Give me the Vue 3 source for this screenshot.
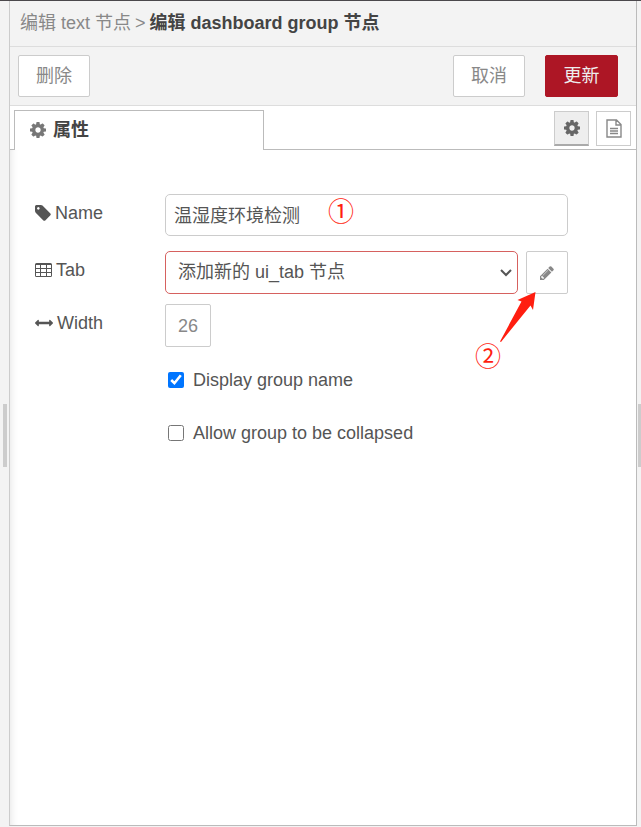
<script setup>
import { ref } from 'vue'

const name = ref('温湿度环境检测')
const tab = ref('new')
const width = ref(26)
const displayName = ref(true)
const collapsible = ref(false)

const cogPath = 'M1152 896q0-106-75-181t-181-75-181 75-75 181 75 181 181 75 181-75 75-181zm512-109v222q0 12-8 23t-20 13l-185 28q-19 54-39 91 35 50 107 138 10 12 10 25t-9 23q-27 37-99 108t-94 71q-12 0-26-9l-138-108q-44 23-91 38-16 136-29 186-7 28-36 28h-222q-14 0-24.5-8.5t-11.5-21.5l-28-184q-49-16-90-37l-141 107q-10 9-25 9-14 0-25-11-126-114-165-168-7-10-7-23 0-12 8-23 15-21 51-66.5t54-70.5q-27-50-41-99l-183-27q-13-2-21-12.5t-8-23.5v-222q0-12 8-23t19-13l186-28q14-46 39-92-40-57-107-138-10-12-10-24 0-10 9-23 26-36 98.5-107.5t94.5-71.5q13 0 26 10l138 107q44-23 91-38 16-136 29-186 7-28 36-28h222q14 0 24.5 8.5t11.5 21.5l28 184q49 16 90 37l142-107q9-9 24-9 13 0 25 10 129 119 165 170 7 8 7 22 0 12-8 23-15 21-51 66.5t-54 70.5q26 50 41 98l183 28q13 2 21 12.5t8 23.5z'
</script>

<template>
  <div class="workspace">
    <div class="gutter gutter-left"><span class="grip"></span></div>

    <main class="tray">
      <header class="crumbs">
        <span class="crumb">编辑 text 节点</span>
        <span class="crumb">&gt;</span>
        <h1 class="crumb-current">编辑 dashboard group 节点</h1>
      </header>

      <div class="toolbar">
        <button type="button" class="btn">删除</button>
        <span class="spacer"></span>
        <button type="button" class="btn">取消</button>
        <button type="button" class="btn btn-primary">更新</button>
      </div>

      <div class="tabs">
        <button type="button" class="tab">
          <svg class="icon-cog" viewBox="128 128 1536 1536"><path :d="cogPath" /></svg>
          <span>属性</span>
        </button>
        <div class="tab-tools">
          <button type="button" class="tool tool-active" aria-label="属性">
            <svg class="icon-cog" viewBox="128 128 1536 1536"><path :d="cogPath" /></svg>
          </button>
          <button type="button" class="tool" aria-label="描述">
            <svg class="icon-file" viewBox="0 0 16 19"><path d="M1 1h9.500L15 5.500V18H1zM10 1v5h5M4 9.500h8M4 12h8M4 14.500h8" /></svg>
          </button>
        </div>
      </div>

      <form class="form" @submit.prevent>
        <div class="row row-name">
          <label class="label" for="group-name">
            <svg class="icon-tag" viewBox="128 128 1536 1536"><path d="M576 448q0-53-37.500-90.500t-90.500-37.500-90.500 37.500-37.500 90.500 37.500 90.500 90.500 37.500 90.500-37.500 37.500-90.500zm1067 576q0 53-37 90l-491 492q-39 37-91 37-53 0-90-37l-715-716q-38-37-64.500-101t-26.500-117v-416q0-52 38-90t90-38h416q53 0 117 26.500t102 64.500l715 714q37 39 37 91z" /></svg>
            <span>Name</span>
          </label>
          <input id="group-name" v-model="name" class="text-input" type="text" />
        </div>

        <div class="row row-tab">
          <label class="label" for="group-tab">
            <svg class="icon-table" viewBox="0 0 17 15"><path fill-rule="evenodd" d="M1.500 0h14A1.500 1.500 0 0 1 17 1.500v11a1.500 1.500 0 0 1-1.500 1.500h-14A1.500 1.500 0 0 1 0 12.500V1.500A1.500 1.500 0 0 1 1.500 0zM1 2v3h4V2zM6 2v3h5V2zM12 2v3h4V2zM1 6v3h4V6zM6 6v3h5V6zM12 6v3h4V6zM1 10v3h4v-3zM6 10v3h5v-3zM12 10v3h4v-3z" /></svg>
            <span>Tab</span>
          </label>
          <div class="select-wrap">
            <select id="group-tab" v-model="tab" class="select">
              <option value="new">添加新的 ui_tab 节点</option>
            </select>
            <svg class="chevron" viewBox="0 0 12 8"><path d="M1 1l5 5 5-5" /></svg>
          </div>
          <button type="button" class="edit" aria-label="编辑">
            <svg class="icon-pencil" viewBox="128 128 1536 1536"><path d="M491 1536l91-91-235-235-91 91v107h128v128h107zm523-928q0-22-22-22-10 0-17 7l-542 542q-7 7-7 17 0 22 22 22 10 0 17-7l542-542q7-7 7-17zm-54-192l416 416-832 832h-416v-416zm683 96q0 53-37 90l-166 166-416-416 166-165q36-38 90-38 53 0 91 38l235 234q37 39 37 91z" /></svg>
          </button>
        </div>

        <div class="row">
          <label class="label" for="group-width">
            <svg class="icon-arrows" viewBox="0 512 1792 768"><path d="M1792 896q0 26-19 45l-256 256q-19 19-45 19t-45-19-19-45v-128h-1024v128q0 26-19 45t-45 19-45-19l-256-256q-19-19-19-45t19-45l256-256q19-19 45-19t45 19 19 45v128h1024v-128q0-26 19-45t45-19 45 19l256 256q19 19 19 45z" /></svg>
            <span>Width</span>
          </label>
          <button id="group-width" type="button" class="size">{{ width }}</button>
        </div>

        <div class="checks">
          <label class="check"><input v-model="displayName" type="checkbox" /><span>Display group name</span></label>
          <label class="check"><input v-model="collapsible" type="checkbox" /><span>Allow group to be collapsed</span></label>
        </div>

        <span class="mark mark-one">①</span>
        <span class="mark mark-two">②</span>
        <svg class="arrow" viewBox="0 0 38 52"><path d="M36.500 1L18.500 9 22.500 10.500 1 50.500 2 51 31.500 14.500 34 19z" /></svg>
      </form>
    </main>

    <div class="gutter gutter-right"><span class="grip"></span></div>
  </div>
</template>

<style>
body {
  margin: 0;
}
</style>

<style scoped>
.workspace {
  box-sizing: border-box;
  display: flex;
  min-height: 100vh;
  border-top: 1px solid #4b484c;
  background: #f3f3f3;
  color: #555;
  font: 18px/24px "Liberation Sans", "Noto Sans CJK SC", sans-serif;
}
.workspace *,
.workspace *::before {
  box-sizing: border-box;
}
button,
input,
select {
  margin: 0;
  color: inherit;
  font: inherit;
}
button {
  padding: 0;
  border: 1px solid #ccc;
  border-radius: 2px;
  background: #fff;
  color: #888;
}
svg {
  display: block;
  flex: none;
  fill: currentColor;
}

.gutter {
  display: flex;
  flex: none;
  align-items: center;
  padding-top: 42px;
}
.gutter-left {
  width: 9px;
  padding-left: 3px;
}
.gutter-right {
  width: 4px;
  padding-left: 1px;
}
.grip {
  width: 4px;
  height: 63px;
  background: #ccc;
}

.tray {
  display: flex;
  flex: 1;
  flex-direction: column;
  min-width: 0;
  margin-bottom: 1px;
  border: solid #bbb;
  border-width: 0 1px 1px;
  border-left-color: #ccc;
  background: #fff;
}
.crumbs {
  display: flex;
  gap: 4px;
  height: 46px;
  padding: 10px;
  border-bottom: 1px solid #ddd;
  background: #f3f3f3;
  color: #888;
  white-space: nowrap;
}
.crumb-current {
  margin: 0;
  color: #444;
  font-size: 18px;
  line-height: 24px;
}

.toolbar {
  display: flex;
  gap: 20px;
  height: 59px;
  padding: 8px 18px 8px 8px;
  border-bottom: 1px solid #ddd;
  background: #f3f3f3;
}
.spacer {
  flex: 1;
}
.btn {
  width: 72px;
  height: 42px;
}
.btn-primary {
  width: 73px;
  border-color: #ad1625;
  background: #ad1625;
  color: #eee;
}

.tabs {
  display: flex;
  justify-content: space-between;
  height: 44px;
  padding: 4px 5px 0 4px;
  box-shadow: inset 0 -1px #bbb;
}
.tab {
  display: flex;
  align-items: center;
  gap: 7px;
  width: 250px;
  height: 40px;
  padding: 0 15px 2px;
  border-color: #bbb;
  border-bottom: 0;
  border-radius: 0;
  color: #444;
  font-weight: bold;
}
.tab .icon-cog {
  color: #777;
}
.tab-tools {
  display: flex;
  gap: 7px;
  padding-top: 1px;
}
.tool {
  display: flex;
  align-items: center;
  justify-content: center;
  width: 35px;
  height: 35px;
  border-radius: 0;
}
.tool-active {
  border-bottom: 2px solid #aaa;
  background: #eee;
  color: #666;
}
.icon-cog {
  width: 16px;
  height: 16px;
}
.icon-file {
  width: 16px;
  height: 19px;
  fill: none;
  stroke: currentColor;
  stroke-width: 1.4;
}

.form {
  position: relative;
  flex: 1;
  padding: 44px 68px 0 25px;
  box-shadow: inset 8px 0 8px -8px #ddd;
}
.row {
  display: flex;
  height: 43px;
}
.row-name {
  height: 42px;
  margin-bottom: 15px;
}
.row-tab {
  margin-bottom: 10px;
}
.label {
  display: flex;
  flex: none;
  align-items: center;
  gap: 4px;
  width: 130px;
  padding-bottom: 5px;
}
.icon-tag {
  width: 16px;
  height: 16px;
}
.icon-table {
  width: 17px;
  height: 15px;
}
.icon-arrows {
  width: 18px;
  height: 8px;
}
.text-input {
  flex: 1;
  min-width: 0;
  padding: 2px 8px 0;
  border: 1px solid #ccc;
  border-radius: 5px;
  background: #fff;
}
.select-wrap {
  position: relative;
  display: flex;
  flex: 1;
  min-width: 0;
}
.select {
  width: 100%;
  padding: 0 30px 1px 12px;
  border: 1px solid #d6615f;
  border-radius: 5px;
  appearance: none;
  background: #fff;
}
.chevron {
  position: absolute;
  top: 18px;
  right: 6px;
  width: 12px;
  height: 8px;
  fill: none;
  stroke: #555;
  stroke-width: 2;
  pointer-events: none;
}
.edit {
  display: flex;
  align-items: center;
  justify-content: center;
  width: 42px;
  margin-left: 8px;
}
.icon-pencil {
  width: 14px;
  height: 14px;
}
.size {
  width: 46px;
}
.checks {
  display: grid;
  gap: 29px;
  padding: 21px 0 20px 133px;
}
.check {
  display: flex;
  align-items: center;
  gap: 9px;
}
.check input {
  width: 16px;
  height: 16px;
}

.mark {
  position: absolute;
  color: #ff1e10;
  font: 26px/28px "Noto Sans CJK SC", sans-serif;
}
.mark-one {
  top: 46px;
  left: 318px;
}
.mark-two {
  top: 191px;
  left: 465px;
}
.arrow {
  position: absolute;
  top: 141px;
  left: 489px;
  width: 38px;
  height: 52px;
  fill: #ff1e10;
}
</style>
